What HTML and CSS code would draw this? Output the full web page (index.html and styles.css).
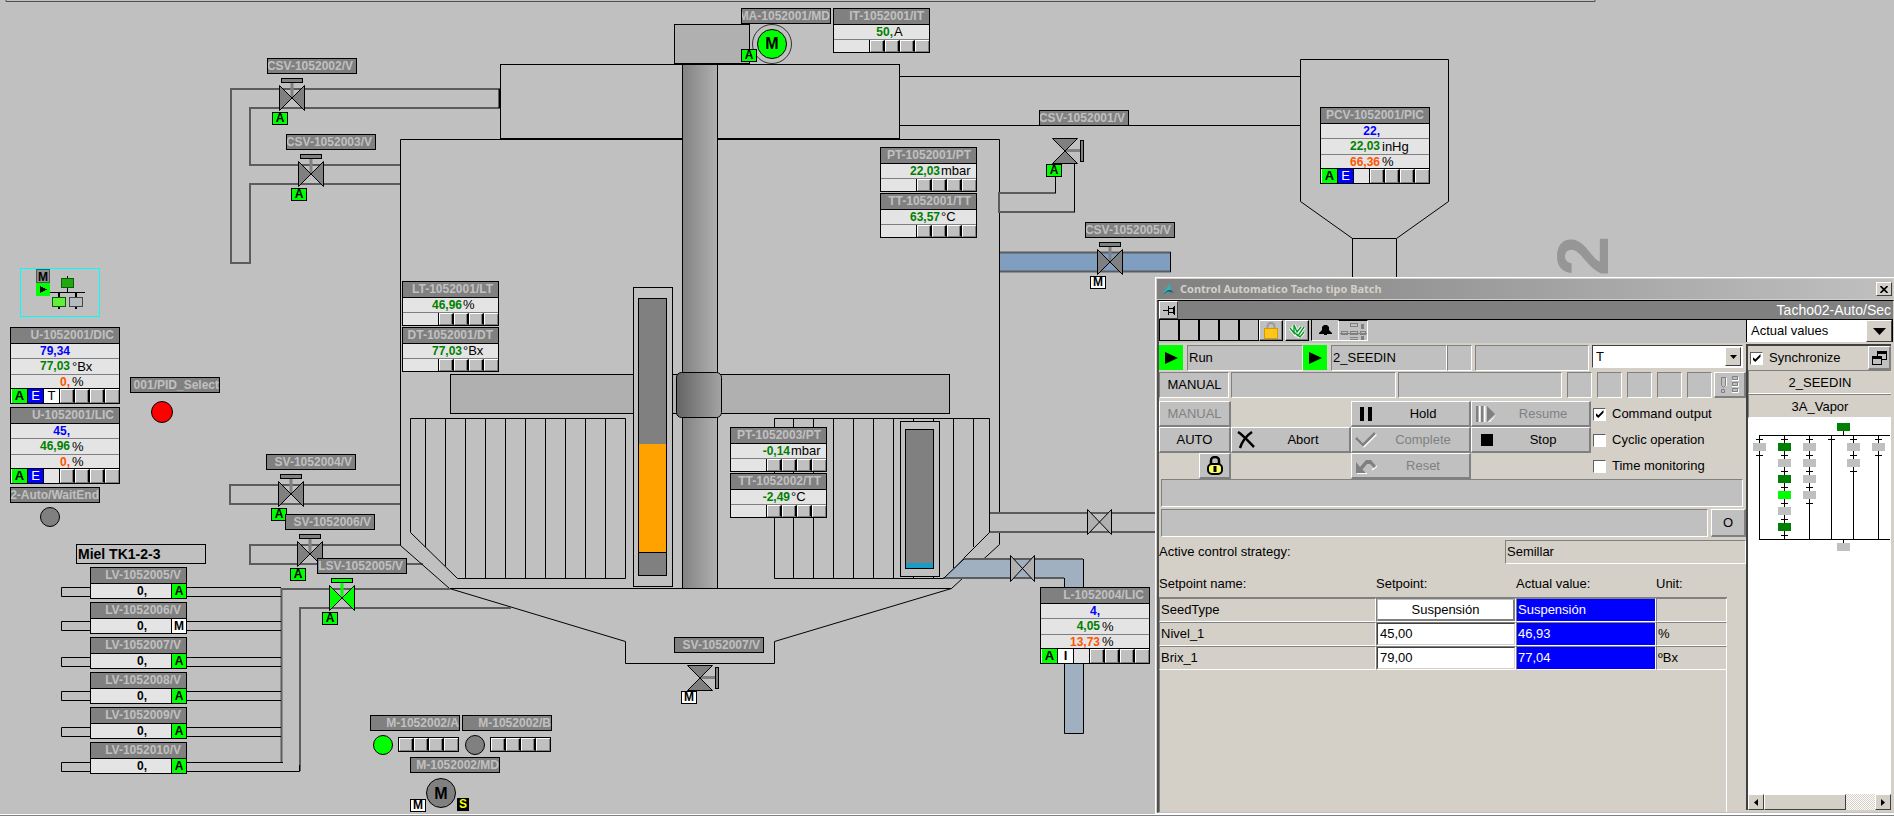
FILE: index.html
```html
<!DOCTYPE html>
<html lang="es">
<head>
<meta charset="utf-8">
<title>Tacho 02</title>
<link rel="stylesheet" href="styles.css">
</head>
<body>
<main class="plant">

<svg class="pipes" width="1894" height="816" viewBox="0 0 1894 816" aria-hidden="true">
  <defs>
    <linearGradient id="shaft"><stop offset="0" stop-color="#828282"/><stop offset="1" stop-color="#b0b0b0"/></linearGradient>
    <linearGradient id="hub"><stop offset="0" stop-color="#646464"/><stop offset="1" stop-color="#a4a4a4"/></linearGradient>
    <symbol id="valve" viewBox="0 0 40 54">
      <path d="M25 25V40" stroke="#808080" stroke-width="3"/>
      <rect x="14.5" y="20.5" width="21" height="4" fill="#808080" stroke="#000"/>
      <path d="M12.500 27.500V52.500L37.500 27.500V52.500Z" fill="#808080" stroke="#000"/>
    </symbol>
    <symbol id="valve-side" viewBox="0 0 50 56">
      <path d="M26 40.500H41" stroke="#808080" stroke-width="3"/>
      <rect x="41.500" y="30.500" width="3" height="21" fill="#808080" stroke="#000"/>
      <path d="M13.500 28.500H38.500L13.500 53.500H38.500Z" fill="#808080" stroke="#000"/>
    </symbol>
  </defs>
  <path d="M6 0V1.500H1595V0" stroke="#505050" fill="none"/>
  <g class="soft">
    <path d="M500 89H231V263H250V184H400M500 108H250V165H400"/>
    <path d="M401 485H230V504H401"/>
    <path d="M401 545H250V564H423"/>
  </g>
  <path class="line" d="M499.500 89V108" stroke-width="2"/>
  <path class="line" d="M900 76.500H1300M900 125.500H1300"/>
  <rect class="line" x="500.500" y="64.500" width="399" height="74"/>
  <path class="line" d="M449.500 588.500L400.500 545.500V139.500H999.500V544.500L951.500 588.500Z"/>
  <path class="line" d="M449.500 588.500L625.500 641.500V663.500H774.500V641.500L951.500 588.500"/>
  <path class="soft" d="M511 608H300V771M281.500 762V589H450"/>
  <g class="line">
    <path d="M90 587.500H61.500V596.500H90M187 587.500H281M187 596.500H281"/>
    <path d="M90 621.500H61.500V630.500H90M187 621.500H281M187 630.500H281"/>
    <path d="M90 657.500H61.500V666.500H90M187 657.500H281M187 666.500H281"/>
    <path d="M90 691.500H61.500V700.500H90M187 691.500H281M187 700.500H281"/>
    <path d="M90 727.500H61.500V736.500H90M187 727.500H281M187 736.500H281"/>
    <path d="M90 762.500H61.500V771.500H90M187 762.500H283M187 771.500H299.500V765"/>
  </g>
  <rect class="plate" x="450.500" y="374.500" width="499" height="39"/>
  <rect x="682.500" y="64.500" width="35" height="524" fill="url(#shaft)" stroke="#000"/>
  <rect class="plate" x="674.500" y="24.500" width="75" height="39"/>
  <rect x="676.500" y="372.500" width="45" height="45" rx="5" fill="url(#hub)" stroke="#000"/>
  <path class="line" d="M410.500 418.500H625.500V578.500H457.500L410.500 532.500Z"/>
  <path class="line" d="M425.500 418V547M445.500 418V566M465.500 418V578M485.500 418V578M505.500 418V578M525.500 418V578M545.500 418V578M565.500 418V578M585.500 418V578M605.500 418V578"/>
  <path class="line" d="M774.500 418.500H989.500V532.500L943.500 578.500H774.500Z"/>
  <path class="line" d="M793.500 418V578M813.500 418V578M833.500 418V578M853.500 418V578M873.500 418V578M893.500 418V578M913.500 418V578M933.500 418V578M953.500 418V568M973.500 418V547"/>
  <g stroke="#000">
    <rect x="633.500" y="287.500" width="39" height="299" fill="#c0c0c0"/>
    <rect x="638.500" y="298.500" width="28" height="277" fill="#808080"/>
    <rect x="639" y="444" width="27" height="108" fill="#ffa200" stroke="none"/>
    <path d="M639 552.500H666"/>
    <rect x="900.500" y="421.500" width="39" height="155" fill="#c0c0c0"/>
    <rect x="905.500" y="429.500" width="28" height="139" fill="#808080"/>
    <rect x="906" y="563" width="27" height="5" fill="#189dc4" stroke="none"/>
  </g>
  <path d="M999 193H1056V212H999Z" fill="#c0c0c0"/>
  <path class="soft" d="M1056 193H999V212H1075"/>
  <path class="line" d="M1055.500 193V164M1074.500 212V164"/>
  <rect x="1000" y="252" width="171" height="20" fill="#809fc0"/>
  <path class="soft" d="M1000 252.500H1171M1000 271.500H1171"/>
  <path class="line" d="M1170.500 252V272M999.500 240V280"/>
  <rect x="990" y="513" width="167" height="19" fill="#c0c0c0"/>
  <path class="soft" d="M990 513H1157M990 532H1157"/>
  <path d="M943.500 578L963 559H1083.500V733.500H1064.500V578Z" fill="#a0b0c0"/>
  <path class="soft" d="M963 559H1083M943 578H1064"/>
  <path class="line" d="M1083.500 559V733.500H1064.500V578M943.500 578.500L964 559"/>
  <path d="M1087.500 509.500V534.500L1111.500 509.500V534.500ZM1010.500 555.500V581.500L1034.500 555.500V581.500Z" fill="#b0b0b0" stroke="#000"/>
  <path class="line" d="M1352.500 278V238.500L1300.500 201.500V59.500H1448.500V201.500L1396.500 238.500V278M1352 238.500H1396"/>
  <text class="number" transform="translate(1608 276) rotate(-90)">2</text>
  <circle class="thin" cx="772" cy="44" r="19.500"/>
  <circle cx="772" cy="44" r="14.500" fill="#0f0" stroke="#000"/>
  <circle cx="162" cy="412" r="10.500" fill="#f00" stroke="#000"/>
  <circle cx="50" cy="517" r="9.500" fill="#808080" stroke="#000"/>
  <circle cx="383" cy="745" r="9.500" fill="#0f0" stroke="#000"/>
  <circle cx="475" cy="745" r="9.500" fill="#808080" stroke="#000"/>
  <circle cx="441" cy="793" r="14.500" fill="#808080" stroke="#000"/>
  <text class="motor" x="772" y="49">M</text>
  <text class="motor" x="441" y="799">M</text>
  <g shape-rendering="crispEdges">
    <rect x="20.500" y="268.500" width="79" height="48" fill="none" stroke="#0ff"/>
    <rect x="36.500" y="269.500" width="13" height="13" fill="#909090" stroke="#555"/>
    <rect x="36" y="283" width="14" height="13" fill="#0f0"/>
    <path d="M40 286L47 289.500L40 293Z"/>
    <path d="M50 292.500H85M67.500 276V292" stroke="#000"/>
    <path d="M59 292V309M76 292V309" stroke="#000" stroke-width="2"/>
    <rect x="61.500" y="278.500" width="12" height="9" fill="#1fa80f" stroke="#0a5c05"/>
    <rect x="52.500" y="297.500" width="13" height="9" fill="#63ee3c" stroke="#0a5c05"/>
    <rect x="69.500" y="297.500" width="13" height="9" fill="#b4bcc2" stroke="#444"/>
  </g>
  <text class="mini" x="43" y="281">M</text>
</svg>

<section class="node n-dic face wide"><h3>U-1052001/DIC</h3><p class="sp"><b>79,34</b></p><p class="pv"><b>77,03</b><span>°Bx</span></p><p class="mv"><b>0,</b><span>%</span></p><div class="status"><i class="a">A</i><i class="e">E</i><i class="w">T</i><u></u><u></u><u></u><u></u></div></section>
<section class="node n-lic face wide"><h3>U-1052001/LIC</h3><p class="sp"><b>45,</b></p><p class="pv"><b>46,96</b><span>%</span></p><p class="mv"><b>0,</b><span>%</span></p><div class="status"><i class="a">A</i><i class="e">E</i><i></i><u></u><u></u><u></u><u></u></div></section>
<section class="node n-pcv face wide"><h3>PCV-1052001/PIC</h3><p class="sp"><b>22,</b></p><p class="pv"><b>22,03</b><span>inHg</span></p><p class="mv"><b>66,36</b><span>%</span></p><div class="status"><i class="a">A</i><i class="e">E</i><i></i><u></u><u></u><u></u><u></u></div></section>
<section class="node n-l4 face wide"><h3>L-1052004/LIC</h3><p class="sp"><b>4,</b></p><p class="pv"><b>4,05</b><span>%</span></p><p class="mv"><b>13,73</b><span>%</span></p><div class="status"><i class="a">A</i><i class="w"><b>I</b></i><i></i><u></u><u></u><u></u><u></u></div></section>

<section class="node n-it face"><h3>IT-1052001/IT</h3><p class="pv"><b>50,</b><span>A</span></p><div class="status"><u></u><u></u><u></u><u></u></div></section>
<section class="node n-pt1 face"><h3>PT-1052001/PT</h3><p class="pv"><b>22,03</b><span>mbar</span></p><div class="status"><u></u><u></u><u></u><u></u></div></section>
<section class="node n-tt1 face"><h3>TT-1052001/TT</h3><p class="pv"><b>63,57</b><span>°C</span></p><div class="status"><u></u><u></u><u></u><u></u></div></section>
<section class="node n-lt face"><h3>LT-1052001/LT</h3><p class="pv"><b>46,96</b><span>%</span></p><div class="status"><u></u><u></u><u></u><u></u></div></section>
<section class="node n-dt face"><h3>DT-1052001/DT</h3><p class="pv"><b>77,03</b><span>°Bx</span></p><div class="status"><u></u><u></u><u></u><u></u></div></section>
<section class="node n-pt3 face"><h3>PT-1052003/PT</h3><p class="pv"><b>-0,14</b><span>mbar</span></p><div class="status"><u></u><u></u><u></u><u></u></div></section>
<section class="node n-tt2 face"><h3>TT-1052002/TT</h3><p class="pv"><b>-2,49</b><span>°C</span></p><div class="status"><u></u><u></u><u></u><u></u></div></section>

<div class="node n-csv2 valve"><span class="tag">CSV-1052002/V</span><svg width="40" height="54"><use href="#valve"/></svg><i class="mode a">A</i></div>
<div class="node n-csv3 valve"><span class="tag">CSV-1052003/V</span><svg width="40" height="54"><use href="#valve"/></svg><i class="mode a">A</i></div>
<div class="node n-sv4 valve"><span class="tag">SV-1052004/V</span><svg width="40" height="54"><use href="#valve"/></svg><i class="mode a">A</i></div>
<div class="node n-sv6 valve"><span class="tag">SV-1052006/V</span><svg width="40" height="54"><use href="#valve"/></svg><i class="mode a">A</i></div>
<div class="node n-lsv5 valve"><span class="tag">LSV-1052005/V</span><svg width="40" height="54" viewBox="0 0 40 54"><path d="M25 25V40" stroke="#0f0" stroke-width="3"/><rect x="14.500" y="20.500" width="21" height="4" fill="#0f0" stroke="#000"/><path d="M12.500 27.500V52.500L37.500 27.500V52.500Z" fill="#0f0" stroke="#000"/></svg><i class="mode a">A</i></div>
<div class="node n-csv5 valve"><span class="tag">CSV-1052005/V</span><svg width="40" height="54"><use href="#valve"/></svg><i class="mode w">M</i></div>
<div class="node n-csv1 valve side"><span class="tag">CSV-1052001/V</span><svg width="50" height="56"><use href="#valve-side"/></svg><i class="mode a">A</i></div>
<div class="node n-sv7 valve side"><span class="tag">SV-1052007/V</span><svg width="50" height="56"><use href="#valve-side"/></svg><i class="mode w">M</i></div>

<span class="node n-pid tag tight">001/PID_Select</span>
<span class="node n-wait tag tight">2-Auto/WaitEnd</span>
<span class="node n-ma tag tight">MA-1052001/MD</span><i class="node n-ma-mode mode a">A</i>
<span class="node n-ma2 tag tight">M-1052002/A</span>
<span class="node n-mb2 tag tight">M-1052002/B</span>
<span class="node n-md2 tag tight">M-1052002/MD</span>
<div class="node n-ca cells"><u></u><u></u><u></u><u></u></div>
<div class="node n-cb cells"><u></u><u></u><u></u><u></u></div>
<i class="node n-md-mode mode w">M</i><i class="node n-md-s mode s">S</i>

<strong class="node n-miel caption">Miel TK1-2-3</strong>
<div class="node n-lv feeds">
  <section class="feed"><h3>LV-1052005/V</h3><p><b>0,</b><i class="a">A</i></p></section>
  <section class="feed"><h3>LV-1052006/V</h3><p><b>0,</b><i class="w">M</i></p></section>
  <section class="feed"><h3>LV-1052007/V</h3><p><b>0,</b><i class="a">A</i></p></section>
  <section class="feed"><h3>LV-1052008/V</h3><p><b>0,</b><i class="a">A</i></p></section>
  <section class="feed"><h3>LV-1052009/V</h3><p><b>0,</b><i class="a">A</i></p></section>
  <section class="feed"><h3>LV-1052010/V</h3><p><b>0,</b><i class="a">A</i></p></section>
</div>

<section class="window" aria-label="Control Automatico Tacho tipo Batch">
  <header class="titlebar">
    <svg width="14" height="14" viewBox="0 0 14 14" aria-hidden="true"><path d="M1 13L9 1L10 8L13 11L7 9.500Z" fill="#2fb3ba"/><path d="M1 13L7 9.500L13 11L10 8L7 8Z" fill="#17626c"/></svg>
    <h1>Control Automatico Tacho tipo Batch</h1>
    <button class="close" aria-label="Close"><svg width="8" height="7" viewBox="0 0 8 7"><path d="M.5 0L7.500 7M7.500 0L.5 7" stroke="#000" stroke-width="1.600"/></svg></button>
  </header>
  <div class="client">
    <div class="band">
      <button class="pin" aria-label="Pin"><svg width="14" height="12" viewBox="0 0 14 12" shape-rendering="crispEdges"><path d="M1 6H6M6.500 2V11M6 4.500H11M6 8H11M12.500 2V11M11.500 3V10" stroke="#000" fill="none"/></svg></button>
      <span>Tacho02-Auto/Sec</span>
    </div>
    <div class="split">
      <div class="left">
        <div class="tools">
          <span class="slot"></span><span class="slot"></span><span class="slot"></span><span class="slot"></span><span class="slot"></span>
          <button aria-label="Lock"><svg width="14" height="17" viewBox="0 0 14 17"><path d="M3.500 8V4.500a3.500 3.500 0 0 1 7 0V8" fill="none" stroke="#999" stroke-width="2"/><rect x=".5" y="6.500" width="13" height="10" fill="#ffc61a" stroke="#d99a00"/></svg></button>
          <button aria-label="Acknowledge"><svg width="16" height="15" viewBox="0 0 16 15" fill="none"><path d="M1 5l4 5V2l3 7 4-5M5 9l4 4 6-9M8 11l3 3 4-5" stroke="#fff" stroke-width="3"/><path d="M1 5l4 5V2l3 7 4-5M5 9l4 4 6-9M8 11l3 3 4-5" stroke="#0a9a2a" stroke-width="1.400"/></svg></button>
          <span class="bell"><svg width="13" height="10" viewBox="0 0 13 10"><path d="M5 0h3l2 2v3l3 3v1H8v1H5V9H0V8l3-3V2Z"/></svg></span>
          <span class="chart"><svg width="27" height="19" viewBox="0 0 27 19" fill="none" stroke="#808080" shape-rendering="crispEdges"><path d="M10.500 1.500h7v3h-7zM1.500 9.500h6v3h-6zM10.500 9.500h7v3h-7zM20.500 9.500h5v3h-5zM10 15.500h8M10 17.500h8M0 11.500h27"/><path d="M22.500 2v5M22.500 14v4" stroke-width="3"/></svg></span>
        </div>
        <div class="state">
          <span class="play"><svg width="13" height="12" viewBox="0 0 13 12"><path d="M0 0L13 6L0 12Z"/></svg></span>
          <span class="well long">Run</span>
          <span class="play"><svg width="13" height="12" viewBox="0 0 13 12"><path d="M0 0L13 6L0 12Z"/></svg></span>
          <span class="well long">2_SEEDIN</span>
          <span class="well small"></span>
          <span class="well grow"></span>
          <span class="combo"><select aria-label="T"><option>T</option></select><span class="arrow"><svg width="7" height="4" viewBox="0 0 7 4"><path d="M0 0H7L3.500 4Z"/></svg></span></span>
        </div>
        <div class="modes">
          <span class="well mid">MANUAL</span><span class="well grow"></span><span class="well grow"></span><span class="well small"></span><span class="well small"></span><span class="well small"></span><span class="well small"></span><span class="well small"></span>
          <button class="raised" aria-label="Details" disabled><svg width="18" height="17" viewBox="0 0 18 17" fill="none" stroke="#808080"><path d="M.5 1.500h4v8l-2 2-2-2zM.5 13.500h3v3h-3zM11.500.5h5v3h-5zM11.500 6.500h5v3h-5zM11.500 12.500h5v3h-5z"/><path d="M11 4.500h6.500V1M11 10.500h6.500V7M11 16.500h6.500V13M5.500 2v8" stroke="#fff"/></svg></button>
        </div>
        <div class="commands">
          <button class="raised" disabled>MANUAL</button>
          <button class="raised icon c3"><svg width="16" height="16" viewBox="0 0 16 16"><path d="M2 1h4v14H2zM10 1h4v14h-4z"/></svg><span>Hold</span></button>
          <button class="raised icon" disabled><svg width="22" height="18" viewBox="0 0 22 18"><path d="M3.500 1v16h2V1zM8.500 1v16h2V1zM13 17h2l7-8" fill="#fff"/><path d="M1 1h2.500v16H1zM6 1h2.500v16H6zM12 1l8 8-8 8z" fill="#808080"/></svg><span>Resume</span></button>
          <label class="check"><input type="checkbox" checked>Command output</label>
          <button class="raised c1">AUTO</button>
          <button class="raised icon"><svg width="18" height="18" viewBox="0 0 18 18"><path d="M1 1C7 5 12 11 17 16M15 1C9 5 5 11 3 17" fill="none" stroke="#000" stroke-width="2.500"/></svg><span>Abort</span></button>
          <button class="raised icon" disabled><svg width="22" height="16" viewBox="0 0 22 16" fill="none" stroke-width="2.500"><path d="M2 7l7 7L21 2" stroke="#fff"/><path d="M1 6l7 7L20 1" stroke="#808080"/></svg><span>Complete</span></button>
          <button class="raised icon"><svg width="18" height="14" viewBox="0 0 18 14"><path d="M4 1h12v12H4z"/></svg><span>Stop</span></button>
          <label class="check"><input type="checkbox">Cyclic operation</label>
          <button class="raised padlock" aria-label="Unlock"><svg width="16" height="19" viewBox="0 0 16 19"><path d="M4 9V4.500a4 3.500 0 0 1 8 0V9" fill="none" stroke="#000" stroke-width="2.500"/><rect x="1" y="8" width="14" height="10" rx="4" fill="#ffff60" stroke="#000" stroke-width="2"/><path d="M8 10v6" stroke="#000" stroke-width="3"/></svg></button>
          <button class="raised icon c3" disabled><svg width="22" height="16" viewBox="0 0 22 16"><path d="M2 15.500h10M17 12l5-4" fill="none" stroke="#fff" stroke-width="1.500"/><path d="M1 4v11h10l-3.500-3.500L12 6h3l4 4 2-2-5-6h-5L5 9Z" fill="#808080"/></svg><span>Reset</span></button>
          <label class="check c5"><input type="checkbox">Time monitoring</label>
        </div>
        <div class="message"><span class="well"></span></div>
        <div class="message"><span class="well"></span><button class="raised">O</button></div>
        <div class="strategy"><span>Active control strategy:</span><output class="well">Semillar</output></div>
        <table class="points">
          <colgroup><col class="k1"><col class="k2"><col class="k2"><col class="k3"></colgroup>
          <thead><tr><th>Setpoint name:</th><th>Setpoint:</th><th>Actual value:</th><th>Unit:</th></tr></thead>
          <tbody>
            <tr><td>SeedType</td><td class="edit"><button class="value">Suspensión</button></td><td class="actual">Suspensión</td><td></td></tr>
            <tr><td>Nivel_1</td><td class="edit"><input aria-label="Nivel_1" value="45,00"></td><td class="actual">46,93</td><td>%</td></tr>
            <tr><td>Brix_1</td><td class="edit"><input aria-label="Brix_1" value="79,00"></td><td class="actual">77,04</td><td>ºBx</td></tr>
          </tbody>
        </table>
        <div class="rest"></div>
      </div>
      <aside class="right">
        <span class="combo big"><select aria-label="View"><option>Actual values</option></select><span class="arrow"><svg width="13" height="7" viewBox="0 0 13 7"><path d="M0 0H13L6.500 7Z"/></svg></span></span>
        <div class="pane">
          <div class="sync"><label class="check"><input type="checkbox" checked>Synchronize</label><button class="raised" aria-label="Windows"><svg width="15" height="14" viewBox="0 0 15 14" shape-rendering="crispEdges"><path d="M5 0h10v9h-5v5H0V5h5zM6 3v2h4v3h4V3zM1 8v5h8V8z" fill-rule="evenodd"/></svg></button></div>
          <div class="step">2_SEEDIN</div>
          <div class="step">3A_Vapor</div>
          <svg class="flow" width="142" height="140" viewBox="0 0 142 140" shape-rendering="crispEdges" aria-hidden="true">
            <path d="M95.500 13V17M142 17.500H11.500V121.500H142M36.500 17V121M61.500 17V121M83.500 17V121M105.500 17V121M130.500 17V121M95.500 121V126M8 21.500h7M33 21.500h7M58 21.500h7M80 21.500h7M102 21.500h7M127 21.500h7M8 37.500h7M33 37.500h7M58 37.500h7M102 37.500h7M127 37.500h7M33 53.500h7M58 53.500h7M102 53.500h7M33 69.500h7M58 69.500h7M33 85.500h7M58 85.500h7M33 101.500h7M33 117.500h7" fill="none" stroke="#000"/>
            <path d="M5 25h13v8H5zM30 41h13v8H30zM30 89h13v8H30zM55 25h13v8H55zM55 41h13v8H55zM55 57h13v8H55zM55 73h13v8H55zM99 25h13v8H99zM99 41h13v8H99zM124 25h13v8h-13zM89 125h13v8H89z" fill="#c0c0c0"/>
            <path d="M89 5h13v8H89zM30 25h13v8H30zM30 57h13v8H30zM30 105h13v8H30z" fill="#008000"/>
            <path d="M30 73h13v8H30z" fill="#0f0"/>
          </svg>
          <div class="scroll"><button aria-label="Scroll left"><svg width="4" height="7" viewBox="0 0 4 7"><path d="M4 0V7L0 3.500Z"/></svg></button><span class="thumb"></span><span class="track"></span><button aria-label="Scroll right"><svg width="4" height="7" viewBox="0 0 4 7"><path d="M0 0V7L4 3.500Z"/></svg></button></div>
        </div>
      </aside>
    </div>
  </div>
</section>
</main>
</body>
</html>
```
FILE: styles.css
```css
* { box-sizing: border-box; }
body { margin: 0; background: #c0c0c0; font: 13px/16px "Liberation Sans", Arial, sans-serif; color: #000; }
h1, h3, p { margin: 0; }
i, u { font-style: normal; text-decoration: none; }
button, input, select { font: inherit; color: inherit; margin: 0; padding: 0; border-radius: 0; }
svg { display: block; flex: none; }

.plant { position: relative; min-height: 100vh; overflow: hidden; border-bottom: 1px solid #808080; box-shadow: inset 0 -1px #fff; }
.pipes { position: absolute; left: 0; top: 0; }
.line { fill: #c0c0c0; stroke: #000; }
.soft { fill: none; stroke: #5c5c5c; stroke-width: 2; }
.thin { fill: none; stroke: #333; }
.plate { fill: #b0b0b0; stroke: #000; }
path.line { fill: none; }
.number { font: bold 72px "Liberation Sans", Arial, sans-serif; fill: #969696; }
.motor { font: bold 16px "Liberation Sans", Arial, sans-serif; text-anchor: middle; }
.mini { font: bold 12px "Liberation Sans", Arial, sans-serif; text-anchor: middle; }

/* positions of the instruments on the mimic */
.node { position: absolute; }
.n-dic { left: 10px; top: 327px; }
.n-lic { left: 10px; top: 407px; }
.n-pcv { left: 1320px; top: 107px; }
.n-l4 { left: 1040px; top: 587px; }
.n-it { left: 833px; top: 8px; }
.n-pt1 { left: 880px; top: 147px; }
.n-tt1 { left: 880px; top: 193px; }
.n-lt { left: 402px; top: 281px; }
.n-dt { left: 402px; top: 327px; }
.n-pt3 { left: 730px; top: 427px; }
.n-tt2 { left: 730px; top: 473px; }
.n-csv2 { left: 267px; top: 58px; }
.n-csv3 { left: 286px; top: 134px; }
.n-sv4 { left: 266px; top: 454px; }
.n-sv6 { left: 285px; top: 514px; }
.n-lsv5 { left: 317px; top: 558px; }
.n-csv5 { left: 1085px; top: 222px; }
.n-csv1 { left: 1039px; top: 110px; }
.n-sv7 { left: 674px; top: 637px; }
.n-pid { left: 130px; top: 377px; }
.n-wait { left: 10px; top: 487px; }
.n-ma { left: 741px; top: 8px; }
.n-ma-mode { left: 741px; top: 49px; }
.n-ma2 { left: 370px; top: 715px; }
.n-mb2 { left: 462px; top: 715px; }
.n-md2 { left: 410px; top: 757px; }
.n-ca { left: 398px; top: 737px; }
.n-cb { left: 490px; top: 737px; }
.n-md-mode { left: 410px; top: 799px; }
.n-md-s { left: 457px; top: 798px; }
.n-miel { left: 76px; top: 544px; }
.n-lv { left: 90px; top: 567px; }

.tag { display: flex; justify-content: flex-end; width: 90px; height: 16px; padding-right: 3px; overflow: hidden; border: 1px solid #000; background: #808080; color: #c0c0c0; font-weight: bold; font-size: 12px; line-height: 14px; white-space: nowrap; }
.tight { padding-right: 0; }
.mode { display: flex; align-items: center; justify-content: center; width: 16px; height: 13px; border: 1px solid #000; font-weight: bold; font-size: 12px; line-height: 11px; }
.a { background: #0f0; }
.e { background: #00f; color: #fff; }
.w { background: #fff; }
.s { width: 12px; background: #000; color: #ff0; }
.valve { width: 90px; height: 68px; }
.valve svg { position: absolute; left: 0; top: 0; }
.valve .mode { position: absolute; left: 5px; top: 54px; }
.side .mode { left: 7px; }

.face { width: 97px; border: 1px solid #000; background: #e4e4e4; font-size: 12px; }
.face h3, .feed h3 { height: 16px; padding-right: 5px; border-bottom: 1px solid #000; background: #808080; color: #c0c0c0; font-size: 12px; line-height: 15px; text-align: right; }
.face p { display: flex; gap: 1px; height: 14px; line-height: 14px; }
.face p b { width: 59px; text-align: right; }
.sp { color: #00f; }
.pv { color: #008000; }
.mv { color: #ff5500; }
.face span { color: #000; font-size: 13px; }
.face .status { display: flex; justify-content: flex-end; height: 13px; border-top: 1px solid #808080; }
.status u, .cells u { width: 15px; background: #c0c0c0; border: solid; border-width: 1px 2px 1px 1px; border-color: #fff #000 #808080 #fff; box-shadow: inset -1px 0 #808080; }
.status u:last-child, .cells u:last-child { width: 14px; border-right-width: 0; }
.status u:first-child { box-shadow: -1px 0 #000, inset -1px 0 #808080; }
.wide p { height: 15px; gap: 2px; border-bottom: 1px solid #808080; }
.wide { width: 110px; }
.wide .pv { height: 16px; line-height: 15px; }
.wide .mv { height: 13px; border: 0; }
.wide .status { height: 15px; border-top: 1px solid #000; }
.wide .status i { display: flex; align-items: center; justify-content: center; width: 16px; border-right: 1px solid #000; font-size: 13px; }
.wide .status .a { font-weight: bold; }
.cells { display: flex; width: 61px; height: 15px; border: 1px solid #000; }

.caption { width: 130px; height: 20px; border: 1px solid #000; padding-left: 1px; font-size: 14px; line-height: 18px; }
.feeds { display: flex; flex-direction: column; gap: 3px; width: 97px; }
.feed { border: 1px solid #000; background: #e4e4e4; font-size: 12px; }
.feed p { display: flex; justify-content: flex-end; height: 14px; line-height: 14px; font-weight: bold; }
.feed b { flex: 1; padding-right: 24px; text-align: right; }
.feed i { width: 15px; border-left: 1px solid #000; text-align: center; }

/* batch control window */
.window { position: absolute; left: 1155px; right: 0; top: 277px; bottom: 1px; display: flex; flex-direction: column; padding-left: 1px; border: solid #fff; border-width: 1px 0 1px 1px; background: #d4d0c8; }
.titlebar { display: flex; align-items: center; gap: 5px; height: 20px; margin: 1px 1px 1px 0; padding: 0 1px 0 4px; background: linear-gradient(90deg, #808080, #c0c0c0); color: #d4d0c8; }
.titlebar h1 { flex: 1; font: bold 11px/16px "Noto Sans", sans-serif; }
.close { display: flex; align-items: center; justify-content: center; width: 16px; height: 14px; background: #d4d0c8; border: 1px solid; border-color: #fff #404040 #404040 #fff; }
.client { flex: 1; display: flex; flex-direction: column; border: solid; border-width: 1px 1px 1px 2px; border-color: #000 #d4d0c8 #c0c0c0 #505050; min-height: 0; }
.band { display: flex; justify-content: space-between; align-items: center; height: 18px; padding-right: 2px; background: #808080; color: #fff; font-size: 14px; }
.pin { display: flex; align-items: center; justify-content: center; width: 19px; height: 18px; background: #c0c0c0; border: 1px solid; border-color: #fff #404040 #404040 #fff; }
.split { flex: 1; display: flex; min-height: 0; }
.left { flex: 1; display: flex; flex-direction: column; min-width: 0; }
.right { width: 147px; display: flex; flex-direction: column; }

.tools { display: flex; height: 24px; padding-bottom: 2px; background: #c0c0c0; border-top: 1px solid #000; }
.slot { width: 20px; border: solid #000; border-width: 0 1px 1px; }
.tools button { display: flex; align-items: center; justify-content: center; width: 24px; margin-right: 2px; border: 1px solid; border-color: #fff #000 #000 #fff; background: #c0c0c0; box-shadow: inset -1px -1px #808080; }
.bell { display: flex; align-items: center; justify-content: center; width: 27px; border: solid #fff; border-width: 0 0 1px; border-left: 1px solid #000; }
.chart { width: 30px; padding: 1px; border: 1px solid #fff; border-top-color: #000; }

.well { display: flex; align-items: center; border: 1px solid; border-color: #808080 #fff #fff #808080; padding-left: 1px; background: #c0c0c0; }
.state, .modes { display: flex; height: 28px; padding: 2px 3px 0 0; }
.play { display: flex; align-items: center; justify-content: center; width: 24px; height: 25px; background: #0f0; }
.state .well { height: 26px; }
.play + .well { margin-left: 4px; }
.long { width: 116px; }
.small { width: 25px; }
.mid { width: 70px; justify-content: center; }
.grow { flex: 1; }
.state .grow { margin: 0 3px; }
.combo { display: flex; width: 151px; height: 23px; padding: 1px; border: 1px solid; border-color: #404040 #fff #fff #404040; background: #fff; }
.combo select { flex: 1; appearance: none; border: 0; background: #fff; padding-left: 2px; }
.arrow { display: flex; align-items: center; justify-content: center; width: 16px; background: #d4d0c8; border: 1px solid; border-color: #fff #404040 #404040 #fff; }
.modes { gap: 2px; padding: 1px 0 1px; }
.modes .small { margin-left: 3px; }
.modes .raised { width: 32px; }
.raised { display: flex; align-items: center; justify-content: center; background: #c0c0c0; border: solid; border-width: 1px 2px 2px 1px; border-color: #fff #808080 #808080 #fff; }
.raised:disabled { color: #808080; }
.commands { display: grid; grid-template-columns: 72px 120px 120px 120px 1fr; grid-auto-rows: 26px; padding-top: 2px; }
.icon { display: grid; grid-template-columns: 22px 1fr; justify-items: center; padding-left: 3px; }
.c1 { grid-column: 1; }
.c3 { grid-column: 3; }
.c5 { grid-column: 5; }
.padlock { width: 32px; justify-self: end; }
.check { display: flex; align-items: center; gap: 6px; padding-left: 2px; }
.check input { appearance: none; display: grid; place-items: center; width: 13px; height: 13px; background: #fff; border: 1px solid; border-color: #606060 #fff #fff #606060; }
.check input:checked::before { content: ""; width: 8px; height: 8px; background: #000; clip-path: polygon(0 35%, 35% 65%, 100% 0, 100% 35%, 35% 100%, 0 70%); }
.message { display: flex; gap: 3px; height: 30px; padding: 0 3px 2px 2px; }
.message .well { flex: 1; }
.message .raised { width: 35px; margin-right: -3px; }
.strategy { display: flex; justify-content: space-between; align-items: center; height: 26px; }
.strategy .well { width: 241px; height: 24px; background: #d4d0c8; }
.points { width: 568px; table-layout: fixed; border-collapse: separate; border-spacing: 0; }
.k1 { width: 217px; }
.k2 { width: 140px; }
.k3 { width: 71px; }
.points th { height: 33px; padding: 5px 0 0; border-bottom: 1px solid #808080; font-weight: normal; text-align: left; }
.points td { height: 24px; padding: 0 0 0 1px; border: 1px solid; border-color: #808080 #fff #fff #808080; }
.points .edit { padding: 0; }
.points .actual { background: #00f; color: #fff; }
.points input { display: block; width: 100%; height: 22px; padding: 0 2px 2px; border: 1px solid; border-color: #404040 #d4d0c8 #d4d0c8 #404040; background: #fff; }
.value { display: block; width: 100%; height: 22px; border: solid; border-width: 1px 2px 2px 1px; border-color: #c0c0c0 #808080 #808080 #c0c0c0; background: #fff; }
.rest { flex: 1; width: 568px; border: solid; border-width: 0 1px 0 1px; border-color: #fff #fff #fff #808080; }

.big { width: 100%; height: 23px; padding: 0; margin-bottom: 1px; border-color: #000; border-width: 1px 1px 0 1px; }
.big select { font-size: 13px; padding-left: 4px; }
.big .arrow { width: 26px; }
.pane { flex: 1; display: flex; flex-direction: column; margin: 1px 2px 2px 0; border: solid #404040; border-width: 2px 0 0 2px; background: #fff; }
.sync { display: flex; justify-content: space-between; height: 24px; background: #d4d0c8; }
.sync .raised { width: 23px; }
.step { height: 24px; border: solid; border-width: 1px 0 1px 1px; border-color: #808080 #fff #fff #808080; background: #d4d0c8; text-align: center; line-height: 23px; }
.flow { flex: none; }
.scroll { display: flex; height: 16px; margin-top: auto; background: repeating-conic-gradient(#fff 0 25%, #d4d0c8 0 50%) 0 0 / 2px 2px; }
.scroll button, .thumb { display: flex; align-items: center; justify-content: center; width: 16px; border: 1px solid; border-color: #fff #404040 #404040 #fff; background: #d4d0c8; }
.scroll .thumb { width: 82px; }
.track { flex: 1; }
```
